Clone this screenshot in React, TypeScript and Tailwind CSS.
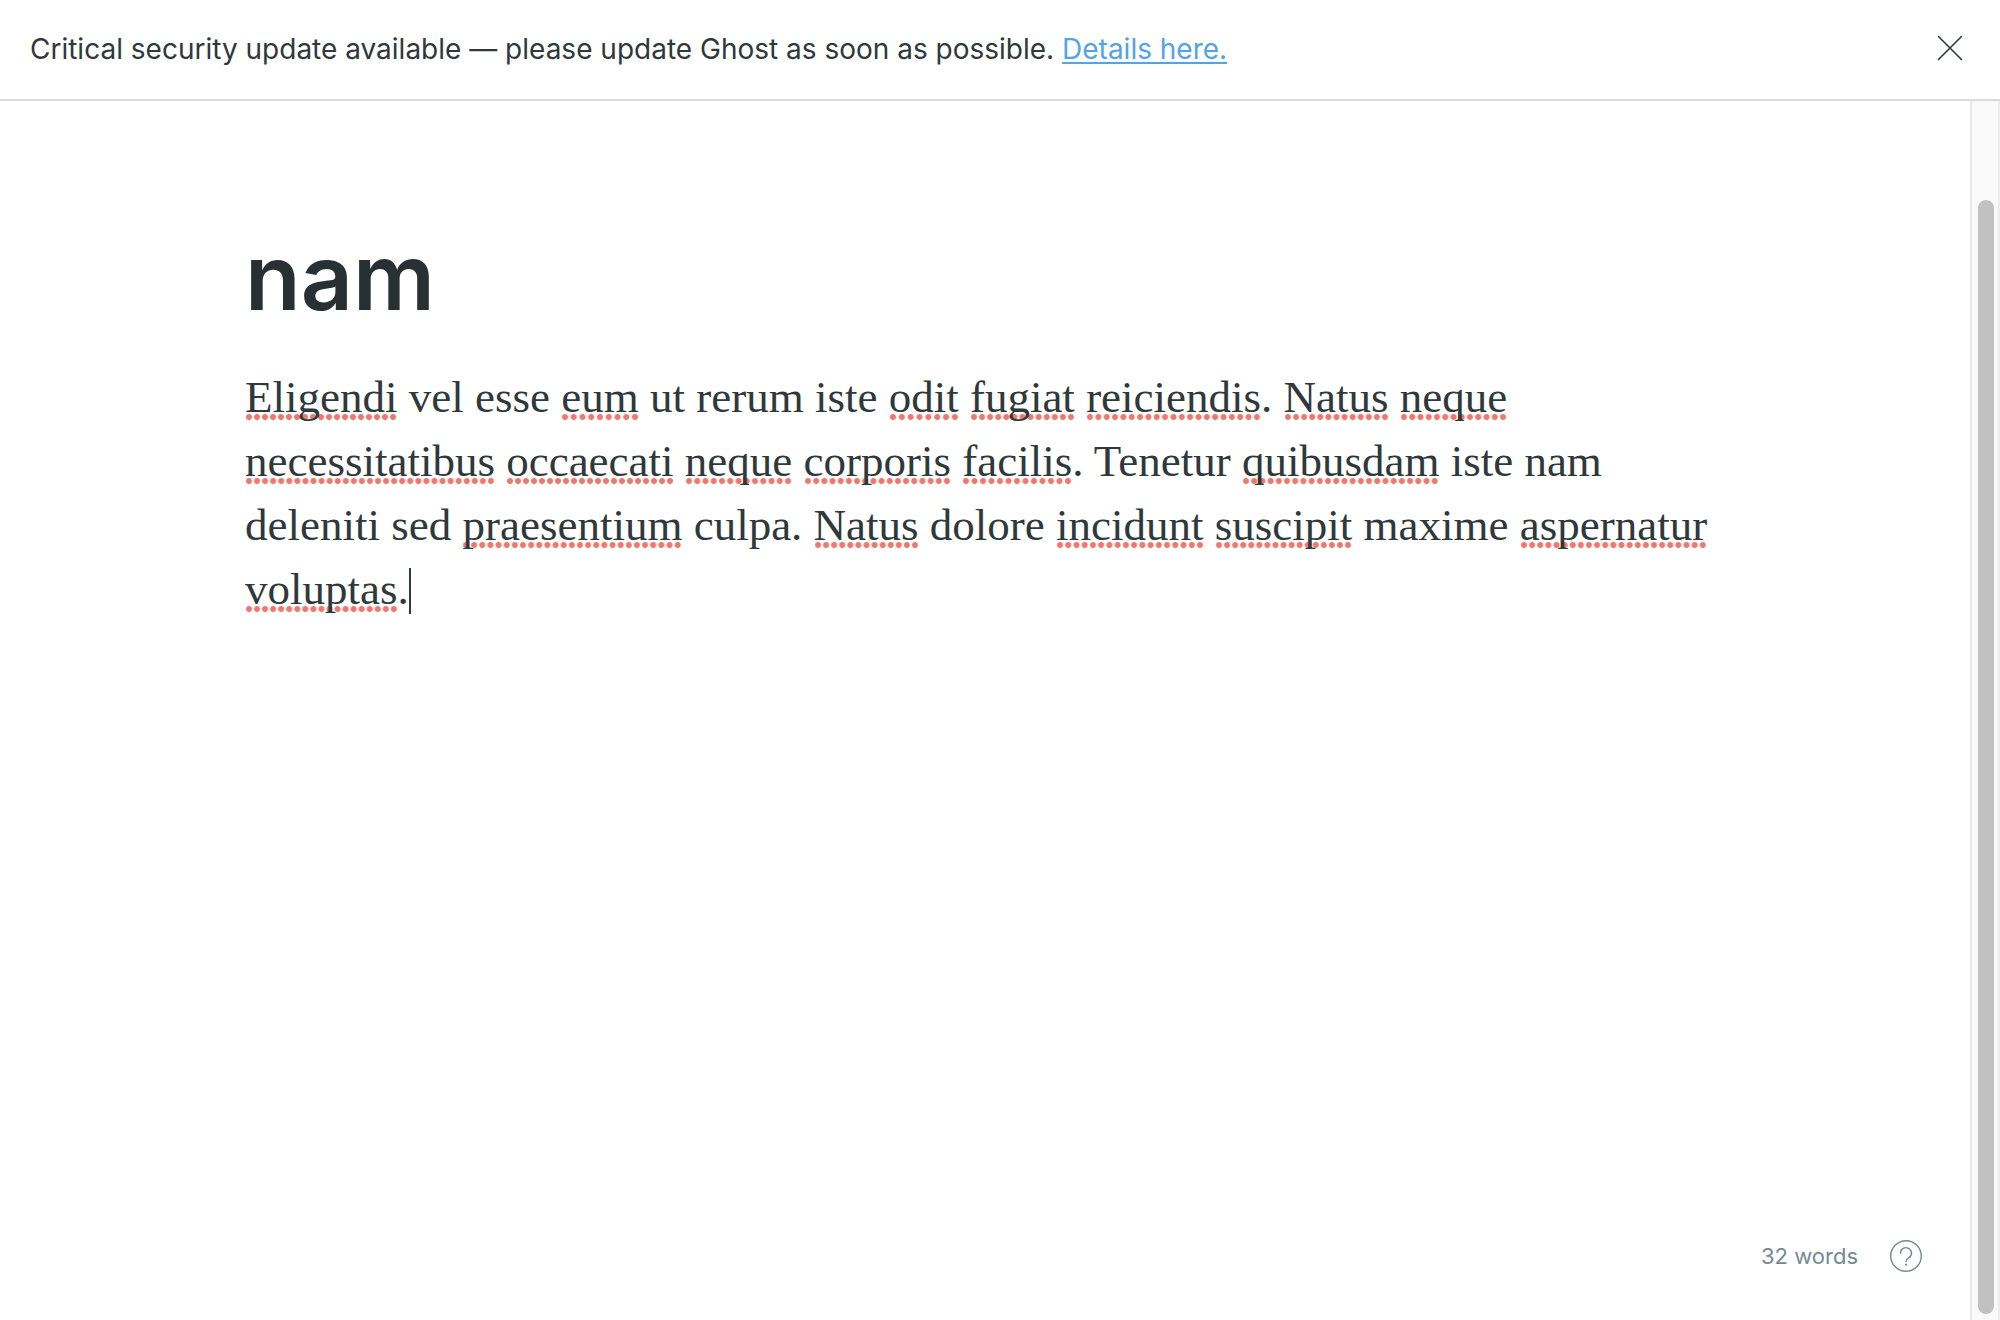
import React from "react";

const paragraph =
  "*Eligendi* vel esse *eum* ut rerum iste *odit* *fugiat* *reiciendis*. *Natus* *neque* *necessitatibus* *occaecati* *neque* *corporis* *facilis*. Tenetur *quibusdam* iste nam deleniti sed *praesentium* culpa. *Natus* dolore *incidunt* *suscipit* maxime *aspernatur* *voluptas*.";

function Misspelled({ children }: { children: React.ReactNode }) {
  return (
    <span className="bg-[radial-gradient(circle_at_4px_3px,#f0776c_2.5px,transparent_3.5px)] bg-[length:8px_6px] [background-position:left_bottom_2px] [background-repeat:space_no-repeat]">
      {children}
    </span>
  );
}

function Word({ token }: { token: string }) {
  if (!token.startsWith("*")) return <span>{token}</span>;
  const [, word, punctuation] = token.split("*");
  return (
    <>
      <Misspelled>{word}</Misspelled>
      {punctuation}
    </>
  );
}

function Banner() {
  return (
    <header className="flex items-center justify-between border-b-2 border-[#dadcdc] py-7 pr-9 pl-[30px]">
      <p className="text-[28px] leading-[43px]">
        Critical security update available — please update Ghost as soon as possible.{" "}
        <a href="#details" className="text-[#54a3e8] underline decoration-2 underline-offset-3">
          Details here.
        </a>
      </p>
      <button type="button" aria-label="Close notification" className="-mt-1">
        <svg className="size-7" viewBox="0 0 28 28" fill="none" stroke="currentColor" strokeWidth="1.6" strokeLinecap="round">
          <path d="M2.5 2.5l23 23M25.5 2.5l-23 23" />
        </svg>
      </button>
    </header>
  );
}

function Editor() {
  return (
    <main className="flex flex-1 flex-col">
      <div className="mx-auto flex w-full max-w-[1480px] flex-1 flex-col pt-30">
        <input
          aria-label="Post title"
          defaultValue="nam"
          spellCheck={false}
          className="h-28 w-full bg-transparent text-[91px] font-semibold text-[#283033] outline-none"
        />
        <div
          role="textbox"
          aria-multiline="true"
          aria-label="Post content"
          contentEditable
          suppressContentEditableWarning
          spellCheck={false}
          className="mt-8 flex-1 font-['Liberation_Serif',serif] text-[45px] leading-16 outline-none"
        >
          <p>
            {paragraph.split(" ").map((token, i) => (
              <React.Fragment key={i}>
                {i > 0 && " "}
                <Word token={token} />
              </React.Fragment>
            ))}
            <span className="inline-block h-[46px] w-0.5 bg-[#2f383b] align-[-10px]" />
          </p>
        </div>
      </div>
      <footer className="flex items-center justify-end gap-8 pr-12 pb-12 text-[#738a94]">
        <span className="text-[22px] leading-8">32 words</span>
        <a href="#help" aria-label="Help">
          <svg className="size-8" viewBox="0 0 32 32" fill="none" stroke="currentColor" strokeWidth="1.4" strokeLinecap="round">
            <circle cx="16" cy="16" r="15.3" />
            <path d="M10.5 13.2a5.5 5.5 0 1 1 8.6 4.5c-2 1.2-3.1 1.7-3.1 3.8" />
            <circle cx="16" cy="24.8" r="1" fill="currentColor" stroke="none" />
          </svg>
        </a>
      </footer>
    </main>
  );
}

export default function App() {
  return (
    <div className="flex h-screen flex-col bg-white font-[Inter,sans-serif] text-[#2f383b]">
      <Banner />
      <div className="flex min-h-0 flex-1">
        <Editor />
        <div className="flex w-[30px] flex-col border-x-2 border-l-[#e7e7e7] border-r-[#ededed] bg-[#f9f9f9] px-1.5 pt-[99px] pb-1.5">
          <div className="w-4 flex-1 rounded-full bg-[#c1c1c1]" />
        </div>
      </div>
    </div>
  );
}
